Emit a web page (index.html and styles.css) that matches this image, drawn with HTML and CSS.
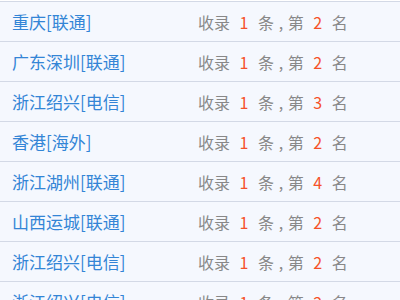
FILE: index.html
```html
<!DOCTYPE html>
<html lang="zh-CN">
<head>
    <meta charset="UTF-8">
    <meta name="viewport" content="width=device-width, initial-scale=1.0">
    <title>收录排名</title>
    <link rel="stylesheet" href="styles.css">
</head>
<body>
    <ul class="rank-list">
        <li class="rank-row"><span class="site">重庆[联通]</span><span class="stat">收录 <em>1</em> 条 , 第 <em>2</em> 名</span></li>
        <li class="rank-row"><span class="site">广东深圳[联通]</span><span class="stat">收录 <em>1</em> 条 , 第 <em>2</em> 名</span></li>
        <li class="rank-row"><span class="site">浙江绍兴[电信]</span><span class="stat">收录 <em>1</em> 条 , 第 <em>3</em> 名</span></li>
        <li class="rank-row"><span class="site">香港[海外]</span><span class="stat">收录 <em>1</em> 条 , 第 <em>2</em> 名</span></li>
        <li class="rank-row"><span class="site">浙江湖州[联通]</span><span class="stat">收录 <em>1</em> 条 , 第 <em>4</em> 名</span></li>
        <li class="rank-row"><span class="site">山西运城[联通]</span><span class="stat">收录 <em>1</em> 条 , 第 <em>2</em> 名</span></li>
        <li class="rank-row"><span class="site">浙江绍兴[电信]</span><span class="stat">收录 <em>1</em> 条 , 第 <em>2</em> 名</span></li>
        <li class="rank-row"><span class="site">浙江绍兴[电信]</span><span class="stat">收录 <em>1</em> 条 , 第 <em>2</em> 名</span></li>
    </ul>
</body>
</html>
```

FILE: styles.css
```css
/* General Styles */
body {
    margin: 0;
    background-color: #ffffff;
    font-family: "Noto Sans CJK SC", "Noto Sans", sans-serif;
    font-size: 16px;
}

.rank-list {
    list-style: none;
    margin: 1px 0 0;
    padding: 0;
    border-top: 1px solid #d3d9e6;
}

.rank-row {
    display: flex;
    align-items: center;
    height: 39px;
    background-color: #f5f8fe;
    border-bottom: 1px solid #d3d9e6;
}

.site {
    width: 198px;
    padding-left: 12px;
    box-sizing: border-box;
    font-size: 17px;
    color: #3385d6;
}

.stat {
    color: #888888;
    word-spacing: 1px;
}

.stat em {
    font-style: normal;
    color: #f5522a;
    padding: 0 5px;
}
```
